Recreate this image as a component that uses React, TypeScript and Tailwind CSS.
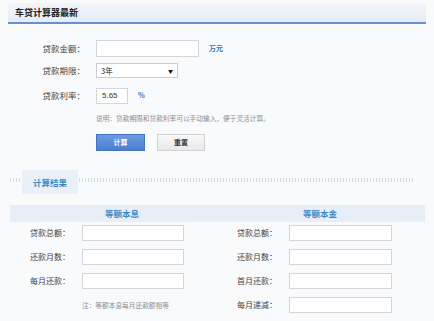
import React from "react";

const font = { fontFamily: '"Noto Sans CJK SC", "Noto Sans", sans-serif' };

function Field({ w }: { w: string }) {
  return <div className={`${w} h-[16px] bg-white border border-[#d3d6da]`} />;
}

export default function App() {
  const leftRows = ["贷款总额：", "还款月数：", "每月还款："];
  const rightRows = ["贷款总额：", "还款月数：", "首月还款：", "每月递减："];
  return (
    <div className="w-[434px] h-[321px] overflow-hidden bg-[#f9fafc] text-[#333]" style={font}>
      {/* header */}
      <div className="mx-[8px] mt-[3px] h-[21px] bg-gradient-to-b from-[#f2f5fa] to-[#e6edf7] border-b-2 border-[#6a8fc9] flex items-center pl-[7px]">
        <span className="text-[9px] font-bold text-[#222] leading-none">车贷计算器最新</span>
      </div>

      {/* form */}
      <div className="mt-[16px] flex items-center h-[16px]">
        <div className="w-[85px] text-right text-[8.5px] text-[#444] leading-none">贷款金额：</div>
        <div className="ml-[11px] w-[103px] h-[17px] bg-white border border-[#d3d6da]" />
        <span className="ml-[10px] text-[7px] font-bold text-[#2f74b5] leading-none">万元</span>
      </div>
      <div className="mt-[7px] flex items-center h-[15px]">
        <div className="w-[85px] text-right text-[8.5px] text-[#444] leading-none">贷款期限：</div>
        <div className="ml-[11px] w-[82px] h-[15px] bg-white border border-[#c9ccd0] flex items-center justify-between px-[4px]">
          <span className="text-[7.5px] leading-none text-[#222]">3年</span>
          <span className="text-[5px] leading-none text-[#111]">▼</span>
        </div>
      </div>
      <div className="mt-[10px] flex items-center h-[15px]">
        <div className="w-[85px] text-right text-[8.5px] text-[#444] leading-none">贷款利率：</div>
        <div className="ml-[11px] w-[32px] h-[16px] bg-white border border-[#d3d6da] flex items-center pl-[5px]">
          <span className="text-[8px] leading-none text-[#333]" style={{ fontFamily: '"Liberation Sans", sans-serif' }}>5.65</span>
        </div>
        <span className="ml-[10px] text-[7px] font-bold text-[#2f74b5] leading-none">%</span>
      </div>
      <div className="mt-[9px] pl-[96px] h-[12px] flex items-center">
        <span className="text-[6.7px] text-[#8a8f96] leading-none whitespace-nowrap">说明：贷款期限和贷款利率可以手动输入，便于灵活计算。</span>
      </div>
      <div className="mt-[10px] pl-[96px] flex gap-[12px]">
        <div className="w-[49px] h-[17px] bg-gradient-to-b from-[#6b9be0] to-[#4b7ed0] border border-[#4573c0] flex items-center justify-center">
          <span className="text-[7px] text-white leading-none font-bold">计算</span>
        </div>
        <div className="w-[48px] h-[17px] bg-gradient-to-b from-[#f8f8f8] to-[#e9e9e9] border border-[#cfd1d4] flex items-center justify-center">
          <span className="text-[7px] text-[#333] leading-none font-bold">重置</span>
        </div>
      </div>

      {/* section title */}
      <div className="mt-[19px] mx-[10px] relative h-[24px]">
        <div className="absolute left-0 right-[9px] top-[8px] h-[4px] bg-[repeating-linear-gradient(90deg,#d4dae2_0_1px,transparent_1px_3px)]" />
        <div className="absolute left-[12px] top-0 w-[56px] h-[24px] bg-[#e9f0f8] flex items-center justify-center">
          <span className="text-[8.5px] font-bold text-[#3b8ac4] leading-none">计算结果</span>
        </div>
      </div>

      {/* table header */}
      <div className="mt-[11px] ml-[10px] w-[415px] h-[17px] bg-[#e7eef8] grid grid-cols-[224px_1fr] items-center">
        <div className="text-center text-[8.5px] font-bold text-[#3b8ac4] leading-none">等额本息</div>
        <div className="text-center pr-[19px] text-[8.5px] font-bold text-[#3b8ac4] leading-none">等额本金</div>
      </div>

      <div className="mt-[3px] ml-[10px] grid grid-cols-[224px_1fr]">
        <div className="flex flex-col gap-[8px]">
          {leftRows.map((l) => (
            <div key={l} className="flex items-center h-[16px]">
              <div className="w-[60px] text-right text-[8px] text-[#444] leading-none">{l}</div>
              <div className="ml-[12px]"><Field w="w-[102px]" /></div>
            </div>
          ))}
          <div className="h-[16px] flex items-center pl-[72px]">
            <span className="text-[6.7px] text-[#8a8f96] leading-none whitespace-nowrap">注：等额本息每月还款额相等</span>
          </div>
        </div>
        <div className="flex flex-col gap-[8px]">
          {rightRows.map((l) => (
            <div key={l} className="flex items-center h-[16px]">
              <div className="w-[43px] text-right text-[8px] text-[#444] leading-none">{l}</div>
              <div className="ml-[12px]"><Field w="w-[103px]" /></div>
            </div>
          ))}
        </div>
      </div>
    </div>
  );
}
